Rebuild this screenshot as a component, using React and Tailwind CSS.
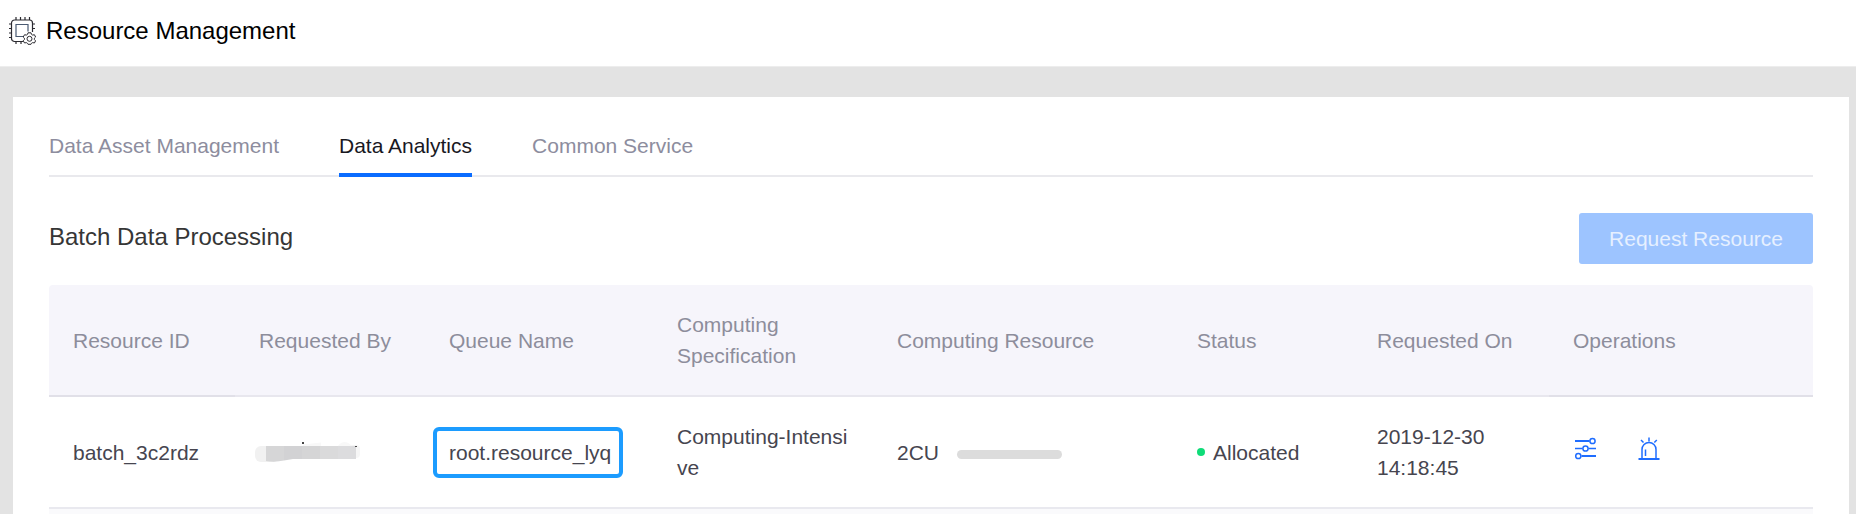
const tabs = ["Data Asset Management", "Data Analytics", "Common Service"];

const columns = [
  { label: "Resource ID", width: "w-[186px]", edge: true },
  { label: "Requested By", width: "w-[190px]" },
  { label: "Queue Name", width: "w-[228px]" },
  { label: "Computing Specification", width: "w-[220px]" },
  { label: "Computing Resource", width: "w-[300px]" },
  { label: "Status", width: "w-[180px]" },
  { label: "Requested On", width: "w-[196px]" },
  { label: "Operations", width: "w-auto", edge: true },
];

function ChipIcon() {
  return (
    <svg width="28" height="28" viewBox="-1 0 28 28" fill="none" stroke="#2b2a30" strokeWidth="1.2" aria-hidden="true">
      <path d="M14 24.500H5.500a3 3 0 0 1-3-3V6a3 3 0 0 1 3-3h15a3 3 0 0 1 3 3v9" />
      <path d="M14 19.500H7V7.500h12v7" stroke="#4a5a72" />
      <path d="M7 0v3M11.500 0v3M16 0v3M20.500 0v3M7 24.500V27M12 24.500V27M0 7h2.500M0 11.500h2.500M0 16h2.500M0 20.500h2.500M23.500 7H26M23.500 11.500H26" />
      <path
        d="M19.600 15.800h3l.5 1.600 1.200.7 1.700-.4 1.200 2.300-1.200 1.200v1.400l1.200 1.200-1.200 2.200-1.700-.4-1.200.7-.5 1h-3l-.5-1-1.200-.7-1.700.4-1.400-2.200 1.200-1.200v-1.400l-1.200-1.200 1.400-2.300 1.700.4 1.200-.7z"
        transform="translate(-.6 0)"
        fill="#fff"
        strokeWidth="1"
      />
      <circle cx="20.500" cy="21.800" r="2.500" strokeWidth="1" />
    </svg>
  );
}

function SlidersIcon() {
  return (
    <svg width="24" height="24" viewBox="-2 0 24 24" fill="none" stroke="#1f6dff" strokeWidth="1.500" aria-hidden="true">
      <circle cx="17.500" cy="4" r="2.600" />
      <circle cx="10.500" cy="11.500" r="2.600" />
      <circle cx="3.300" cy="19" r="2.600" />
      <path d="M0 4h14.500M6.500 19h14.500" strokeWidth="2" />
      <path d="M0 11.500h7.500M13.500 11.500H21" />
    </svg>
  );
}

function AlarmIcon() {
  return (
    <svg width="22" height="24" viewBox="0 0 22 24" fill="none" stroke="#1f6dff" strokeWidth="1.500" aria-hidden="true">
      <path d="M4 21.500V12.500a7 7 0 0 1 14 0v9" />
      <path d="M7.500 12.500V19M11 0.500v4M3 3l2.500 2.500M18.800 3L16.300 5.500" />
      <path d="M.5 22h21" strokeWidth="2" />
    </svg>
  );
}

function RedactedName() {
  return (
    <svg className="-ml-1 block" width="106" height="22" viewBox="0 0 106 22" aria-label="Hidden name" role="img">
      <rect x="0" y="5" width="24" height="16" rx="6" fill="#f1f1f1" />
      <path d="M48 3.500l18-2v5H48zM83 5q6-8 14 0v13H83z" fill="#f8f8f8" />
      <rect x="94" y="4" width="11" height="13" rx="4" fill="#f6f6f6" />
      <path d="M11 5h18v14.500q-9 2-18 .5z" fill="#d6d6d7" />
      <path d="M29 5h18v13h-9l-9 1.500z" fill="#d2d2d4" />
      <path d="M47 5h18v13H47z" fill="#d5d5d6" />
      <path d="M65 5h18v13H65z" fill="#dadadb" />
      <path d="M83 5h18v13H83z" fill="#dcdcde" />
      <path d="M47 1h2v2h-2zM100 5h2v1h-2z" fill="#444" />
    </svg>
  );
}

export default function App() {
  return (
    <div className="flex min-h-screen flex-col bg-[#e3e3e3] font-['Liberation_Sans',Arial,sans-serif] text-[21px] leading-[31px] text-[#46454f]">
      <header className="flex h-[67px] items-center gap-2.5 border-b border-[#ededed] bg-white px-2 pb-1">
        <ChipIcon />
        <h1 className="text-2xl text-black">Resource Management</h1>
      </header>

      <main className="flex flex-1 flex-col pt-[30px] pr-[7px] pl-[13px]">
        <div className="flex flex-1 flex-col bg-white px-9">
          <nav className="flex h-20 gap-[60px] border-b-2 border-[#e9e9ed] pt-[33px]">
            {tabs.map((tab, i) => (
              <a
                key={tab}
                href="#"
                aria-current={i === 1 ? "page" : undefined}
                className={
                  i === 1
                    ? "-mb-0.5 border-b-4 border-[#0a6cff] text-[#19181f]"
                    : "text-[#8d8d9e]"
                }
              >
                {tab}
              </a>
            ))}
          </nav>

          <section className="flex flex-1 flex-col pt-9">
            <div className="mb-[21px] flex items-start justify-between">
              <h2 className="pt-2 text-2xl text-[#363636]">Batch Data Processing</h2>
              <button type="button" disabled className="h-[51px] rounded-[3px] bg-[#9dc4ff] px-[30px] text-[#e6f0ff]">
                Request Resource
              </button>
            </div>

            <table className="w-full table-fixed border-separate border-spacing-0 text-left">
              <thead>
                <tr className="h-28">
                  {columns.map((c) => (
                    <th
                      key={c.label}
                      scope="col"
                      className={`${c.width} ${c.edge ? "border-[#e1e0e8]" : "border-[#e8e7ee]"} border-b-2 bg-[#f6f5fb] px-6 font-normal text-[#8d8d9b] first:rounded-tl last:rounded-tr`}
                    >
                      {c.label}
                    </th>
                  ))}
                </tr>
              </thead>
              <tbody>
                <tr className="h-28 *:border-b-2 *:border-[#e9e9ef] *:px-6">
                  <td>batch_3c2rdz</td>
                  <td>
                    <RedactedName />
                  </td>
                  <td>
                    <span className="-ml-4 inline-block rounded-md border-4 border-[#1c9cff] py-1.5 pr-2 pl-3 align-middle">
                      root.resource_lyq
                    </span>
                  </td>
                  <td className="break-all">Computing-Intensive</td>
                  <td>
                    <div className="flex items-center gap-[18px]">
                      2CU
                      <span className="mt-1 h-[9px] w-[105px] rounded-full bg-[#dcdcdc]" />
                    </div>
                  </td>
                  <td>
                    <div className="flex items-center gap-2">
                      <span className="size-2 rounded-full bg-[#0fdc78]" />
                      Allocated
                    </div>
                  </td>
                  <td>2019-12-30 14:18:45</td>
                  <td>
                    <div className="flex gap-[41px] pb-1.5">
                      <button type="button" aria-label="Adjust resource">
                        <SlidersIcon />
                      </button>
                      <button type="button" aria-label="Alarm settings">
                        <AlarmIcon />
                      </button>
                    </div>
                  </td>
                </tr>
              </tbody>
            </table>
            <div className="min-h-1 flex-1 bg-[#fafafc]" />
          </section>
        </div>
      </main>
    </div>
  );
}
